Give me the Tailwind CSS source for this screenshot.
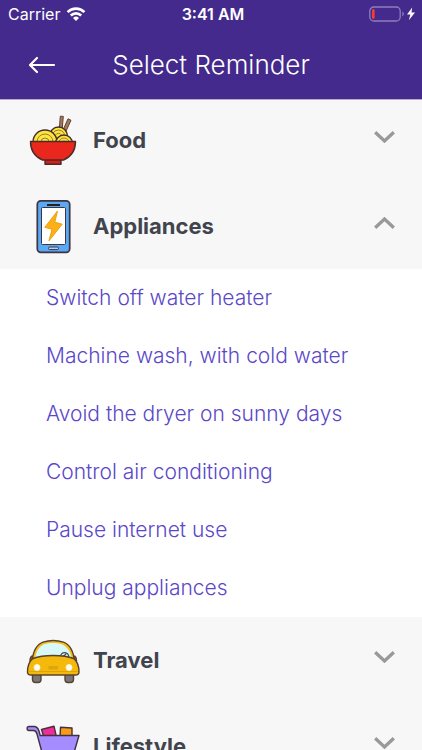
<!DOCTYPE html>
<html lang="en">
<head>
  <meta charset="UTF-8" />
  <meta name="viewport" content="width=device-width, initial-scale=1.0"/>
  <title>Select Reminder</title>
  <script src="https://cdn.jsdelivr.net/npm/@tailwindcss/browser@4"></script>
</head>
<body class="h-screen flex flex-col bg-white font-['Inter',sans-serif]">

  <header class="relative z-10 shrink-0 -mb-[3px] bg-[#432a8c] text-white border-b border-[#b5aacf]">
    <!-- Status bar -->
    <div class="grid grid-cols-3 items-center h-7 pl-2 pr-1 text-base">
      <div class="flex items-center gap-2">
        <span>Carrier</span>
        <svg class="w-5 h-4 shrink-0 -ml-0.5" viewBox="0 0 20 16" fill="none" stroke="currentColor" stroke-width="2.7">
          <path d="M1.6 6.1a12 12 0 0 1 16.8 0"/>
          <path d="M4.8 9.5a7.4 7.4 0 0 1 10.4 0"/>
          <path d="M10 15l-3-3.1a4.3 4.3 0 0 1 6 0z" fill="currentColor" stroke="none"/>
        </svg>
      </div>
      <span class="text-center font-semibold whitespace-nowrap">3:41 AM</span>
      <svg class="w-[50px] h-4 justify-self-end" viewBox="0 0 50 16">
        <rect x="1.8" y="1" width="30.4" height="14" rx="4" fill="none" stroke="#8e7fbb" stroke-width="1.3"/>
        <rect x="4" y="3.2" width="2.6" height="9.6" rx="1" fill="#ff3b30"/>
        <path d="M34.3 5.6c2 .8 2 4 0 4.8z" fill="#8e7fbb"/>
        <path d="M44.2 1.5l-5.2 7h3.4l-1.6 5.7 6.2-7.7h-3.5z" fill="#fff"/>
      </svg>
    </div>
    <!-- Title bar -->
    <div class="grid grid-cols-[56px_1fr_56px] items-center h-[71px]">
      <button type="button" aria-label="Back" class="pl-7 h-full cursor-pointer">
        <svg class="w-7 h-5" viewBox="0 0 28 20" fill="none" stroke="currentColor" stroke-width="2.2" stroke-linecap="round" stroke-linejoin="round">
          <path d="M26 11H2.500M9 4L2 11l7 7"/>
        </svg>
      </button>
      <h1 class="pt-0.5 text-center text-[26px] font-light">Select Reminder</h1>
    </div>
  </header>

  <main class="flex-1 overflow-y-auto [scrollbar-width:none] bg-[#f7f7f7]">
    <section>
      <h2>
        <button type="button" aria-expanded="false" class="group w-full h-[86px] flex items-center gap-3 pl-[25px] pr-[27px] text-left cursor-pointer">
          <svg class="w-14 h-14" viewBox="0 0 56 56" stroke="#4a2a2a" stroke-width="1.4" stroke-linejoin="round">
            <path d="M35.3 4.200l3 .2-1.500 17-2.800-.3zM43 6.800l3 1.500-7.400 16-2.600-1.600z" fill="#a8795a" stroke="#5d4234" stroke-width="1"/>
            <circle cx="33.500" cy="24" r="9" fill="#fbe540"/>
            <path d="M27.500 22a6.500 6.500 0 0 1 12 0M30.500 23a3.500 3.500 0 0 1 6 0" fill="none" stroke="#9a8228" stroke-width="1"/>
            <circle cx="20" cy="30" r="12" fill="#fbe540"/>
            <circle cx="20" cy="30" r="8" fill="none" stroke="#9a8228" stroke-width="1"/>
            <circle cx="20" cy="30" r="4" fill="none" stroke="#9a8228" stroke-width="1"/>
            <circle cx="39" cy="31.500" r="8.500" fill="#fbe540"/>
            <circle cx="39" cy="31.500" r="5.500" fill="none" stroke="#9a8228" stroke-width="1"/>
            <circle cx="39" cy="31.500" r="2.500" fill="none" stroke="#9a8228" stroke-width="1"/>
            <path d="M20 47h16v5.300H20z" fill="#d81f17"/>
            <path d="M5.500 29.500h45c0 9-5 15.500-12 18.500h-21c-7-3-12-9.500-12-18.500z" fill="#e9271c"/>
          </svg>
          <span class="flex-1 text-[22px] font-bold text-[#41444d]">Food</span>
          <svg class="w-[21px] h-3 mb-1.5 group-aria-expanded:rotate-180" viewBox="0 0 21 12" fill="none" stroke="#999" stroke-width="3.300">
            <path d="M1.200 1.200l9.300 8.800 9.300-8.800"/>
          </svg>
        </button>
      </h2>
    </section>

    <section>
      <h2>
        <button type="button" aria-expanded="true" aria-controls="appliances" class="group w-full h-[86px] flex items-center gap-3 pl-[25px] pr-[27px] text-left cursor-pointer">
          <svg class="w-14 h-14" viewBox="0 0 56 56" stroke="#3e3541" stroke-linejoin="round">
            <rect x="12.300" y="2.800" width="32.400" height="51.500" rx="3.500" fill="#5aa9f5" stroke-width="1.700"/>
            <rect x="16.500" y="9.500" width="24" height="37" rx="1" fill="#fff" stroke-width="1"/>
            <path d="M22 7h13" stroke="#222" stroke-width="2"/>
            <rect x="23.500" y="49" width="10" height="2.600" rx="1.200" fill="#a9d5ff" stroke-width="1"/>
            <path d="M32.500 13L19.800 29.300l7.200 2-3 11.500 13.200-16.600-7.400-2z" fill="#fbb018" stroke="#efa00c" stroke-width="1"/>
          </svg>
          <span class="flex-1 text-[22px] font-bold text-[#41444d]">Appliances</span>
          <svg class="w-[21px] h-3 mb-1.5 group-aria-expanded:rotate-180" viewBox="0 0 21 12" fill="none" stroke="#999" stroke-width="3.300">
            <path d="M1.200 1.200l9.300 8.800 9.300-8.800"/>
          </svg>
        </button>
      </h2>
      <ul id="appliances" class="bg-white text-[21px] font-light text-[#5a48c8]">
        <li><button type="button" class="w-full h-[58px] px-[46px] text-left cursor-pointer">Switch off water heater</button></li>
        <li><button type="button" class="w-full h-[58px] px-[46px] text-left cursor-pointer">Machine wash, with cold water</button></li>
        <li><button type="button" class="w-full h-[58px] px-[46px] text-left cursor-pointer">Avoid the dryer on sunny days</button></li>
        <li><button type="button" class="w-full h-[58px] px-[46px] text-left cursor-pointer">Control air conditioning</button></li>
        <li><button type="button" class="w-full h-[58px] px-[46px] text-left cursor-pointer">Pause internet use</button></li>
        <li><button type="button" class="w-full h-[58px] px-[46px] text-left cursor-pointer">Unplug appliances</button></li>
      </ul>
    </section>

    <section>
      <h2>
        <button type="button" aria-expanded="false" class="group w-full h-[86px] flex items-center gap-3 pl-[25px] pr-[27px] text-left cursor-pointer">
          <svg class="w-14 h-14" viewBox="0 0 56 56" stroke="#59412f" stroke-width="1.400" stroke-linejoin="round">
            <rect x="7.500" y="40" width="8.500" height="10.500" rx="3" fill="#77777c"/>
            <rect x="40" y="40" width="8.500" height="10.500" rx="3" fill="#77777c"/>
            <path d="M8 24c-2.500 0-3 3-3 5h3zM48.500 24c2.500 0 3 3 3 5h-3z" fill="#8d6b22"/>
            <path d="M7 30c1-12 5-17.500 11-19.800 6-2 14.500-2 20.500 0C44.500 12.500 48.500 18 49.500 30z" fill="#f6be18"/>
            <path d="M10 27c1-7.500 4-12.500 9-14.700 5.500-1.700 12.500-1.700 18 0 5 2.200 8.500 7.200 9.500 14.700z" fill="#d8f8fa" stroke="none"/>
            <path d="M35.500 24.500c.5-5.500 8-5 8.500 1M38 24.500l3-2.500" fill="none" stroke="#3e4a55" stroke-width="1.200"/>
            <path d="M8 26.500c10-4 30.500-4 40.500 0 4 3 5.500 8 5.500 13.500 0 2-1 3-3.500 3H6c-2.500 0-3.500-1-3.500-3C2.500 34.500 4 29.500 8 26.500z" fill="#f5b90b"/>
            <path d="M3.500 39.500h49.500" stroke="#dca30a" stroke-width="1"/>
            <path d="M23.500 34h9.500v3.500h-9.500z" fill="#dfa50b" stroke="none"/>
            <circle cx="12" cy="35.500" r="3" fill="#fff" stroke="#fff3c4" stroke-width="1"/>
            <circle cx="44" cy="35.500" r="3" fill="#fff" stroke="#fff3c4" stroke-width="1"/>
          </svg>
          <span class="flex-1 text-[22px] font-bold text-[#41444d]">Travel</span>
          <svg class="w-[21px] h-3 mb-1.5 group-aria-expanded:rotate-180" viewBox="0 0 21 12" fill="none" stroke="#999" stroke-width="3.300">
            <path d="M1.200 1.200l9.300 8.800 9.300-8.800"/>
          </svg>
        </button>
      </h2>
    </section>

    <section>
      <h2>
        <button type="button" aria-expanded="false" class="group w-full h-[86px] flex items-center gap-3 pl-[25px] pr-[27px] text-left cursor-pointer">
          <svg class="w-14 h-14" viewBox="0 0 56 56" stroke="#40323f" stroke-width="1.400" stroke-linejoin="round">
            <path d="M16.500 11.500l12.500-3.300 2.500 11-12 2z" fill="#f22c96"/>
            <path d="M35.500 9.300l11.500.7v10H35z" fill="#fb9a14"/>
            <path d="M4 8.500h5c3 0 4 1.500 5 4.500l1.200 4.500H54l-6 20.500H18l-6-22c-.7-2.500-1.500-3.500-3.500-3.500H4c-2.500 0-2.500-4 0-4z" fill="#a58cff"/>
            <path d="M19 43h28" stroke-width="2.500"/>
            <circle cx="23" cy="49" r="3.500" fill="#77777c"/>
            <circle cx="43" cy="49" r="3.500" fill="#77777c"/>
          </svg>
          <span class="flex-1 text-[22px] font-bold text-[#41444d]">Lifestyle</span>
          <svg class="w-[21px] h-3 mb-1.5 group-aria-expanded:rotate-180" viewBox="0 0 21 12" fill="none" stroke="#999" stroke-width="3.300">
            <path d="M1.200 1.200l9.300 8.800 9.300-8.800"/>
          </svg>
        </button>
      </h2>
    </section>
  </main>

  <script>
    document.querySelectorAll('h2 > button').forEach((btn) => {
      btn.addEventListener('click', () => {
        const open = btn.getAttribute('aria-expanded') === 'true';
        btn.setAttribute('aria-expanded', String(!open));
        const list = document.getElementById(btn.getAttribute('aria-controls'));
        if (list) list.classList.toggle('hidden', open);
      });
    });
  </script>
</body>
</html>
